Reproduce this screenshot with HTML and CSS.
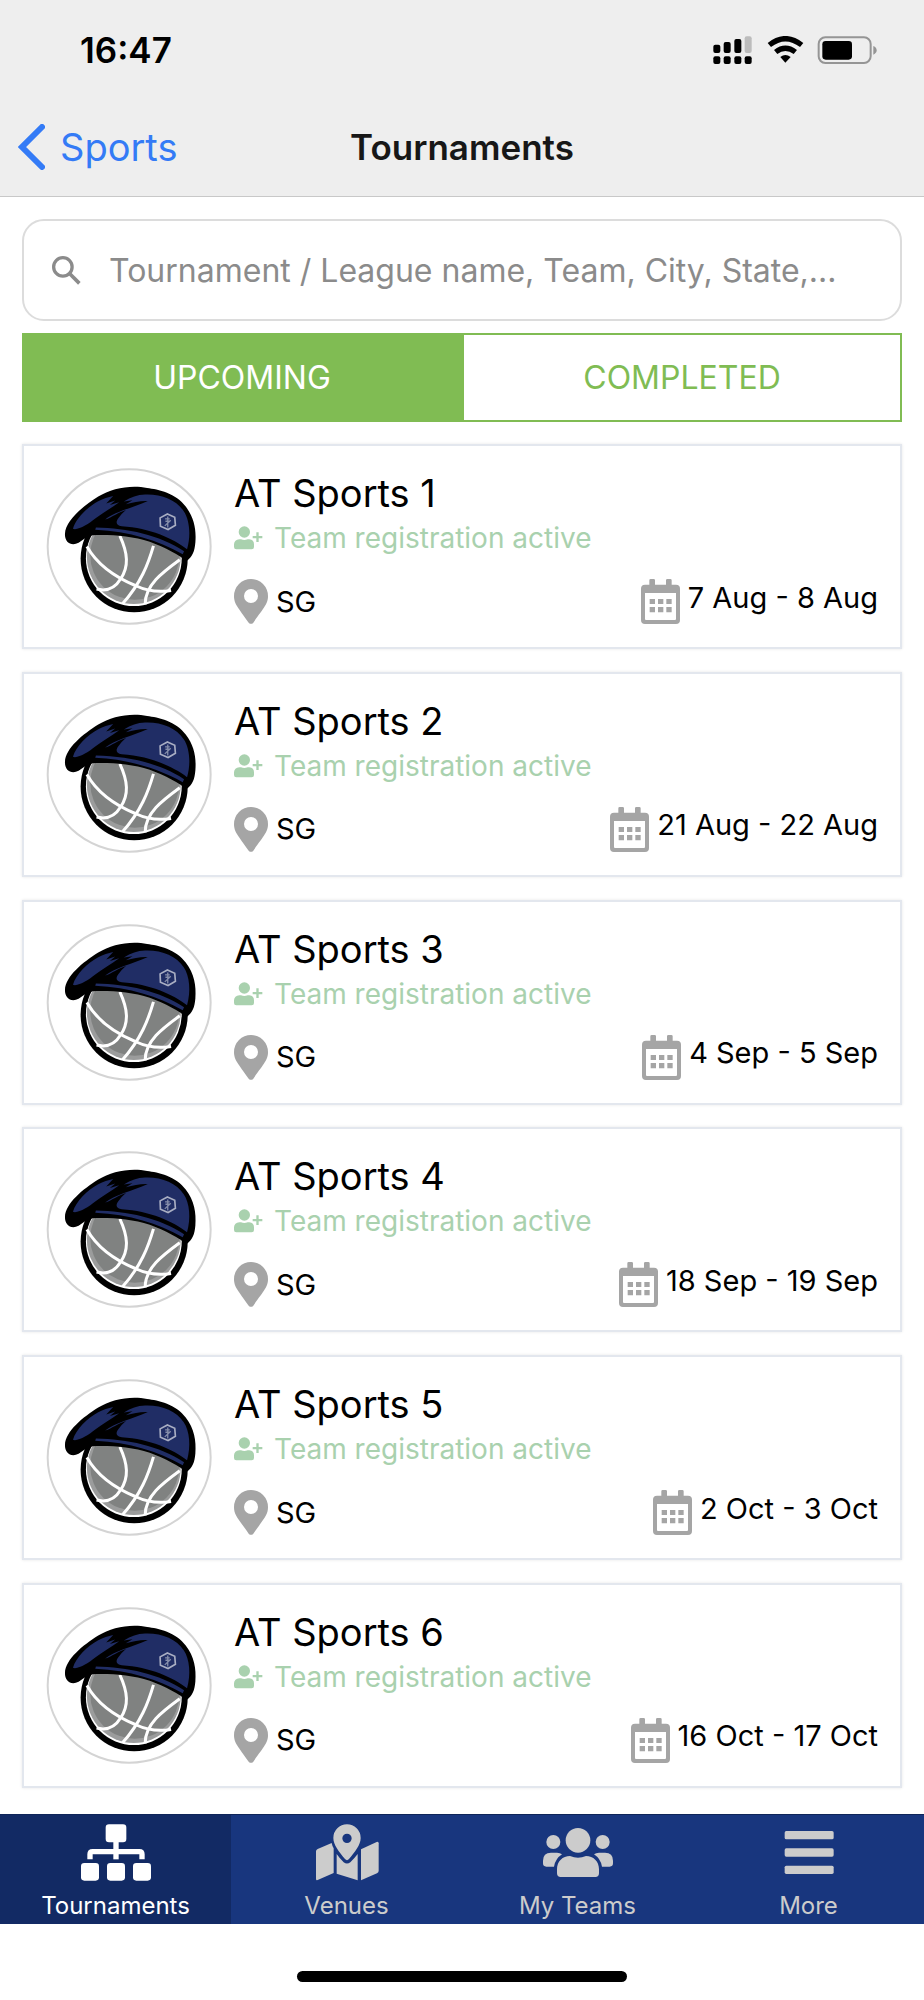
FILE: index.html
```
<!DOCTYPE html>
<html lang="en">
<head>
    <meta charset="UTF-8">
    <meta name="viewport" content="width=device-width, initial-scale=1">
    <title>Tournaments</title>
    <link rel="stylesheet" href="styles.css">
</head>
<body>
    <svg class="sprite" aria-hidden="true">
        <symbol id="logo" viewBox="49 54 500 472">
            <ellipse cx="298" cy="290" rx="245" ry="232" fill="#fff" stroke="#d4d4d4" stroke-width="6"/>
            <circle cx="313" cy="327" r="161" fill="#000"/>
            <circle cx="312" cy="325" r="144" fill="#fff"/>
            <circle cx="312" cy="322" r="141" fill="#9b9c9c"/>
            <circle cx="315" cy="316" r="134" fill="#808281"/>
            <g fill="none" stroke="#fff" stroke-width="9">
                <path d="M171 290C205 350 262 385 318 408C352 424 390 428 424 422"/>
                <path d="M270 258C294 310 298 350 272 388C256 415 232 426 200 418"/>
                <path d="M371 288C356 340 334 400 278 462"/>
                <path d="M450 330C398 368 346 406 346 464"/>
            </g>
            <path d="M105 252C106 212 160 168 205 140C245 114 305 104 352 114C385 118 440 130 468 170C494 204 500 240 497 278C495 304 488 322 470 334C452 318 405 292 360 276C305 258 245 254 188 256C170 260 157 270 146 279C124 290 104 278 105 252Z" fill="#000"/>
            <g fill="#202d65">
                <path d="M129 237C138 205 172 172 205 154C220 146 235 141 250 138L229 161L256 152L240 165L268 157C244 174 218 190 196 206C176 222 146 242 129 237Z"/>
                <path d="M276 229C256 226 258 214 266 204Q276 190 288 180C268 186 246 202 226 209C252 186 308 174 354 153C332 152 312 156 288 163L308 151L282 155C304 142 322 135 346 134C394 132 440 150 462 184C480 210 484 258 472 298C430 266 360 234 276 229Z"/>
                <path d="M198 233C292 235 389 255 463 304L459 313C384 272 300 245 196 240Z"/>
            </g>
            <path d="M413 192L435 202L437 226L415 239L392 229L391 204Z" fill="none" stroke="#a9aec3" stroke-width="5"/>
            <path d="M414 200V233M406 207H420M407 214H420M405 228L423 211" fill="none" stroke="#858daa" stroke-width="4"/>
        </symbol>
        <symbol id="user-plus" viewBox="0 0 87 70">
            <circle cx="31" cy="17" r="17"/>
            <path d="M16 39H21Q31 43 41 39H46Q60 41 60 54V62Q60 69 53 69H7Q0 69 0 62V54Q1 40 16 39Z"/>
            <path d="M67 18h7v11h11v7H74v11h-7V36H56v-7h11Z"/>
        </symbol>
        <symbol id="pin" viewBox="0 0 102 135">
            <path fill-rule="evenodd" d="M51 0A51 51 0 0 0 0 51C0 75 12 85 44 131Q51 138 58 131C90 85 102 75 102 51A51 51 0 0 0 51 0ZM51 30A21 21 0 1 1 51 72A21 21 0 1 1 51 30Z"/>
        </symbol>
        <symbol id="calendar" viewBox="0 0 117 135">
            <path fill-rule="evenodd" d="M25 4Q25 0 29 0H38Q42 0 42 4V17H75V4Q75 0 79 0H88Q92 0 92 4V17H105Q117 17 117 29V123Q117 135 105 135H12Q0 135 0 123V29Q0 17 12 17H25ZM12 42V120Q12 123 15 123H102Q105 123 105 120V42Z"/>
            <path d="M26 60h16v15H26ZM51 60h16v15H51ZM76 60h16v15H76ZM26 84h16v16H26ZM51 84h16v16H51ZM76 84h16v16H76Z"/>
        </symbol>
        <symbol id="sitemap" viewBox="0 0 216 171">
            <rect x="77" y="1" width="62" height="54" rx="10"/>
            <rect x="100" y="50" width="16" height="56"/>
            <path d="M30 106V91Q30 83 38 83H178Q186 83 186 91V106" fill="none" stroke="currentColor" stroke-width="16"/>
            <rect x="3" y="117" width="54" height="53" rx="10"/>
            <rect x="81" y="117" width="54" height="53" rx="10"/>
            <rect x="159" y="117" width="54" height="53" rx="10"/>
        </symbol>
        <symbol id="map" viewBox="0 0 216 171">
            <path fill-rule="evenodd" d="M108 1A41 41 0 0 0 67 42C67 63 85 84 102 105Q108 112 114 105C131 84 149 63 149 42A41 41 0 0 0 108 1ZM108 29A14 14 0 1 1 108 57A14 14 0 1 1 108 29Z"/>
            <path d="M62 57Q64 67 68 73V147L20 168Q15 170 15 164V82Q15 77 20 75Z"/>
            <path d="M77 90Q86 103 98 115Q108 122 118 115Q130 103 140 90V169L77 149Z"/>
            <path d="M150 76L197 54Q203 52 203 58V140Q203 145 198 148L150 169Z"/>
        </symbol>
        <symbol id="users" viewBox="0 0 216 171">
            <circle cx="108" cy="49" r="37"/>
            <circle cx="34" cy="54" r="21"/>
            <circle cx="182" cy="54" r="21"/>
            <path d="M45 136C45 112 62 96 84 96Q108 106 132 96C154 96 171 112 171 136V148Q171 159 160 159H56Q45 159 45 148Z"/>
            <path d="M27 86H45Q54 86 60 91Q40 104 36 128H13Q3 128 3 118V110Q3 86 27 86Z"/>
            <path d="M189 86H171Q162 86 156 91Q176 104 180 128H203Q213 128 213 118V110Q213 86 189 86Z"/>
        </symbol>
        <symbol id="bars" viewBox="0 0 216 171">
            <rect x="35" y="21" width="147" height="25" rx="5"/>
            <rect x="35" y="73" width="147" height="25" rx="5"/>
            <rect x="35" y="125" width="147" height="25" rx="5"/>
        </symbol>
    </svg>

    <header class="header">
        <div class="status-bar">
            <span class="status-time">16:47</span>
            <svg class="status-icons" viewBox="0 0 492 84" aria-hidden="true">
                <rect x="1" y="26" width="21" height="25" rx="6"/>
                <rect x="32" y="18" width="21" height="33" rx="6"/>
                <rect x="64" y="9" width="21" height="42" rx="6"/>
                <rect x="95" y="1" width="21" height="50" rx="6" fill="#bcbcbc"/>
                <rect x="1" y="61" width="21" height="23" rx="6"/>
                <rect x="32" y="61" width="21" height="23" rx="6"/>
                <rect x="64" y="61" width="21" height="23" rx="6"/>
                <rect x="95" y="61" width="21" height="23" rx="6"/>
                <path d="M169 27Q217 -11 266 27M188 48Q217 25 247 48" fill="none" stroke="#000" stroke-width="16"/>
                <path d="M202 63Q217 51 233 63L217 80Z"/>
                <rect x="317" y="4" width="156" height="77" rx="20" fill="none" stroke="#959595" stroke-width="6"/>
                <rect x="328" y="15" width="89" height="56" rx="10"/>
                <path d="M481 30Q491 34 491 43Q491 52 481 56Z" fill="#959595"/>
            </svg>
        </div>
        <div class="title-bar">
            <a class="back-link" href="#">
                <svg class="back-icon" viewBox="0 0 81 138" aria-hidden="true"><path d="M72 9L12 69L72 129" fill="none" stroke="currentColor" stroke-width="18" stroke-linecap="round"/></svg>
                Sports
            </a>
            <h1 class="page-title">Tournaments</h1>
        </div>
    </header>

    <main class="content">
        <label class="search">
            <svg class="search-icon" viewBox="0 0 88 88" aria-hidden="true"><circle cx="33" cy="33" r="28" fill="none" stroke="currentColor" stroke-width="10"/><path d="M54 54L83 83" stroke="currentColor" stroke-width="11"/></svg>
            <input class="search-input" type="search" aria-label="Search tournaments" placeholder="Tournament / League name, Team, City, State,...">
        </label>

        <div class="segments">
            <button class="segment segment-active" type="button">UPCOMING</button>
            <button class="segment" type="button">COMPLETED</button>
        </div>

        <ul class="tournament-list">
            <li class="card">
                <svg class="card-logo" aria-hidden="true"><use href="#logo"/></svg>
                <div class="card-body">
                    <h2 class="card-title">AT Sports 1</h2>
                    <p class="card-status"><svg class="status-icon" aria-hidden="true"><use href="#user-plus"/></svg>Team registration active</p>
                    <div class="card-meta">
                        <span class="place"><svg class="pin-icon" aria-hidden="true"><use href="#pin"/></svg>SG</span>
                        <span class="dates"><svg class="calendar-icon" aria-hidden="true"><use href="#calendar"/></svg><span class="dates-text">7 Aug - 8 Aug</span></span>
                    </div>
                </div>
            </li>
            <li class="card">
                <svg class="card-logo" aria-hidden="true"><use href="#logo"/></svg>
                <div class="card-body">
                    <h2 class="card-title">AT Sports 2</h2>
                    <p class="card-status"><svg class="status-icon" aria-hidden="true"><use href="#user-plus"/></svg>Team registration active</p>
                    <div class="card-meta">
                        <span class="place"><svg class="pin-icon" aria-hidden="true"><use href="#pin"/></svg>SG</span>
                        <span class="dates"><svg class="calendar-icon" aria-hidden="true"><use href="#calendar"/></svg><span class="dates-text">21 Aug - 22 Aug</span></span>
                    </div>
                </div>
            </li>
            <li class="card">
                <svg class="card-logo" aria-hidden="true"><use href="#logo"/></svg>
                <div class="card-body">
                    <h2 class="card-title">AT Sports 3</h2>
                    <p class="card-status"><svg class="status-icon" aria-hidden="true"><use href="#user-plus"/></svg>Team registration active</p>
                    <div class="card-meta">
                        <span class="place"><svg class="pin-icon" aria-hidden="true"><use href="#pin"/></svg>SG</span>
                        <span class="dates"><svg class="calendar-icon" aria-hidden="true"><use href="#calendar"/></svg><span class="dates-text">4 Sep - 5 Sep</span></span>
                    </div>
                </div>
            </li>
            <li class="card">
                <svg class="card-logo" aria-hidden="true"><use href="#logo"/></svg>
                <div class="card-body">
                    <h2 class="card-title">AT Sports 4</h2>
                    <p class="card-status"><svg class="status-icon" aria-hidden="true"><use href="#user-plus"/></svg>Team registration active</p>
                    <div class="card-meta">
                        <span class="place"><svg class="pin-icon" aria-hidden="true"><use href="#pin"/></svg>SG</span>
                        <span class="dates"><svg class="calendar-icon" aria-hidden="true"><use href="#calendar"/></svg><span class="dates-text">18 Sep - 19 Sep</span></span>
                    </div>
                </div>
            </li>
            <li class="card">
                <svg class="card-logo" aria-hidden="true"><use href="#logo"/></svg>
                <div class="card-body">
                    <h2 class="card-title">AT Sports 5</h2>
                    <p class="card-status"><svg class="status-icon" aria-hidden="true"><use href="#user-plus"/></svg>Team registration active</p>
                    <div class="card-meta">
                        <span class="place"><svg class="pin-icon" aria-hidden="true"><use href="#pin"/></svg>SG</span>
                        <span class="dates"><svg class="calendar-icon" aria-hidden="true"><use href="#calendar"/></svg><span class="dates-text">2 Oct - 3 Oct</span></span>
                    </div>
                </div>
            </li>
            <li class="card">
                <svg class="card-logo" aria-hidden="true"><use href="#logo"/></svg>
                <div class="card-body">
                    <h2 class="card-title">AT Sports 6</h2>
                    <p class="card-status"><svg class="status-icon" aria-hidden="true"><use href="#user-plus"/></svg>Team registration active</p>
                    <div class="card-meta">
                        <span class="place"><svg class="pin-icon" aria-hidden="true"><use href="#pin"/></svg>SG</span>
                        <span class="dates"><svg class="calendar-icon" aria-hidden="true"><use href="#calendar"/></svg><span class="dates-text">16 Oct - 17 Oct</span></span>
                    </div>
                </div>
            </li>
        </ul>
    </main>

    <nav class="tab-bar">
        <a class="tab tab-active" href="#"><svg class="tab-icon" aria-hidden="true"><use href="#sitemap"/></svg>Tournaments</a>
        <a class="tab" href="#"><svg class="tab-icon" aria-hidden="true"><use href="#map"/></svg>Venues</a>
        <a class="tab" href="#"><svg class="tab-icon" aria-hidden="true"><use href="#users"/></svg>My Teams</a>
        <a class="tab" href="#"><svg class="tab-icon" aria-hidden="true"><use href="#bars"/></svg>More</a>
    </nav>
    <div class="home-area"><div class="home-indicator"></div></div>
</body>
</html>
```
FILE: styles.css
```
* {
    box-sizing: border-box;
}
body {
    font-family: Inter, "Liberation Sans", sans-serif;
    margin: 0;
    min-height: 100vh;
    display: flex;
    flex-direction: column;
    background: #fff;
    color: #000;
}
svg {
    display: block;
    flex-shrink: 0;
    fill: currentColor;
}
a {
    text-decoration: none;
}
.sprite {
    position: absolute;
    width: 0;
    height: 0;
}

/* header */
.header {
    background: #eee;
    border-bottom: 1px solid #c8c8c8;
}
.status-bar {
    display: flex;
    align-items: center;
    justify-content: space-between;
    height: 100px;
    padding: 0 47px 0 80px;
}
.status-time {
    font-size: 35px;
    font-weight: 600;
}
.status-icons {
    width: 164px;
    height: 28px;
}
.title-bar {
    display: grid;
    grid-template-columns: 1fr auto 1fr;
    align-items: center;
    height: 96px;
    padding: 0 18px 2px;
}
.back-link {
    display: flex;
    align-items: center;
    gap: 15px;
    color: #347bf6;
    font-size: 38px;
}
.back-icon {
    width: 27px;
    height: 46px;
}
.page-title {
    margin: 0;
    font-size: 35px;
    font-weight: 600;
    color: #171717;
}

/* search + segments */
.content {
    flex: 1;
    display: flex;
    flex-direction: column;
    padding: 22px 22px 26px;
}
.search {
    display: flex;
    align-items: center;
    gap: 28px;
    height: 102px;
    padding: 0 28px;
    border: 2px solid #dcdcdc;
    border-radius: 22px;
    color: #8b8b8b;
}
.search-icon {
    width: 29px;
    height: 29px;
}
.search-input {
    flex: 1;
    min-width: 0;
    padding: 0;
    border: none;
    outline: none;
    background: none;
    font-family: inherit;
    font-size: 32px;
    text-overflow: ellipsis;
}
.search-input::placeholder {
    color: #8b8b8b;
}
.segments {
    display: grid;
    grid-template-columns: 1fr 1fr;
    height: 89px;
    margin-top: 12px;
}
.segment {
    padding-bottom: 2px;
    border: 2px solid #80bc53;
    background: #fff;
    color: #80bc53;
    font-family: inherit;
    font-size: 32px;
    cursor: pointer;
}
.segment-active {
    background: #80bc53;
    color: #fff;
}

/* tournament cards */
.tournament-list {
    flex: 1;
    display: flex;
    flex-direction: column;
    justify-content: space-between;
    gap: 20px;
    margin: 22px 0 0;
    padding: 0;
    list-style: none;
}
.card {
    display: flex;
    gap: 21px;
    padding: 22px;
    border: 2px solid #e3e7ee;
    box-shadow: 0 0 3px rgba(0,0,0,0.1);
}
.card-logo {
    width: 167px;
    height: 157px;
}
.card-body {
    flex: 1;
}
.card-title {
    margin: 0;
    font-size: 38px;
    font-weight: 400;
    line-height: 50px;
}
.card-status {
    display: flex;
    align-items: center;
    gap: 11px;
    margin: 0;
    color: #a9d1ae;
    font-size: 28px;
    line-height: 40px;
}
.status-icon {
    width: 29px;
    height: 24px;
}
.card-meta {
    display: flex;
    justify-content: space-between;
    margin-top: 21px;
    font-size: 29px;
    line-height: 36px;
}
.place,
.dates {
    display: flex;
    align-items: center;
    gap: 8px;
}
.dates-text {
    padding-bottom: 8px;
}
.pin-icon {
    width: 34px;
    height: 45px;
    color: #a5a5a5;
}
.calendar-icon {
    width: 39px;
    height: 45px;
    color: #a5a5a5;
}

/* bottom tabs */
.tab-bar {
    display: grid;
    grid-template-columns: repeat(4, 1fr);
    border-top: 1px solid #0f2559;
    background: #18367e;
}
.tab {
    display: flex;
    flex-direction: column;
    align-items: center;
    gap: 10px;
    padding: 9px 0 4px;
    color: #ccc;
    font-size: 24px;
    line-height: 29px;
}
.tab-active {
    background: #122a64;
    color: #fff;
}
.tab-icon {
    width: 72px;
    height: 57px;
}
.home-area {
    display: flex;
    justify-content: center;
    padding: 47px 0 18px;
}
.home-indicator {
    width: 330px;
    height: 11px;
    border-radius: 6px;
    background: #000;
}
```
